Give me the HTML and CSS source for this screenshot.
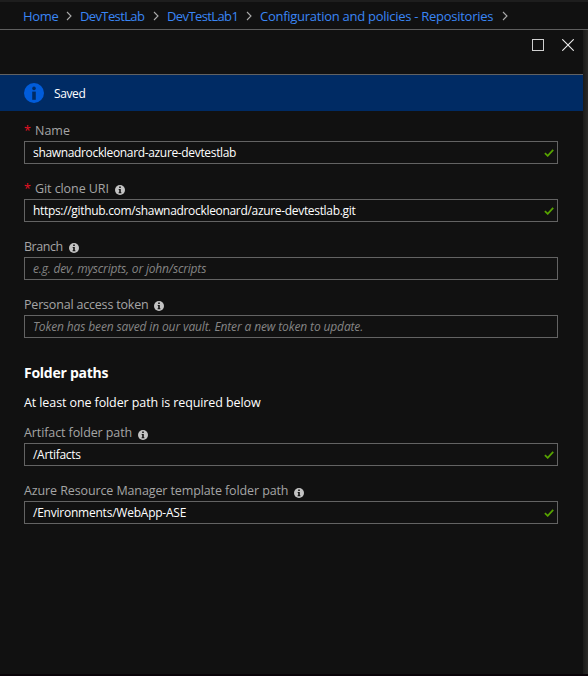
FILE: index.html
```html
<!DOCTYPE html>
<html lang="en">
<head>
<meta charset="utf-8">
<title>Repositories</title>
<link rel="stylesheet" href="styles.css">
</head>
<body>
<svg class="defs" width="0" height="0">
  <symbol id="chev" viewBox="0 0 6 10"><path d="M1 1l4 4-4 4" fill="none" stroke="#aaa" stroke-width="1.1"/></symbol>
  <symbol id="info" viewBox="0 0 10 10"><circle cx="5" cy="5" r="5" fill="#c3c3c3"/><path d="M4.2 1.6h1.6v1.3H4.2zM3.7 4h2.1v3.2h.6v1H3.6v-1h.6V4.9h-.5z" fill="#111"/></symbol>
  <symbol id="check" viewBox="0 0 10 8"><path d="M.9 4.2L3.7 6.8 9.2.9" fill="none" stroke="#57a300" stroke-width="1.8"/></symbol>
</svg>
<nav class="crumbs">
  <a class="c1">Home</a><svg class="chev"><use href="#chev"/></svg>
  <a class="c2">DevTestLab</a><svg class="chev"><use href="#chev"/></svg>
  <a class="c3">DevTestLab1</a><svg class="chev"><use href="#chev"/></svg>
  <a class="c4">Configuration and policies - Repositories</a><svg class="chev"><use href="#chev"/></svg>
</nav>
<div class="main">
  <section class="blade">
    <header class="head">
      <svg width="12" height="12"><rect x=".5" y=".5" width="11" height="11" fill="none" stroke="#d0d0d0"/></svg>
      <svg width="12" height="12"><path d="M.3 .3l11.4 11.4M11.7 .3L.3 11.7" stroke="#eee" stroke-width="1.1"/></svg>
    </header>
    <div class="banner">
      <svg width="20" height="20"><circle cx="10" cy="10" r="10" fill="#015cda"/><circle cx="10" cy="5.4" r="1.8" fill="#002b64"/><path d="M8.2 8.6h3.6v8.2H8.2z" fill="#002b64"/></svg>
      <span>Saved</span>
    </div>
    <form class="form">
      <div class="field"><div class="label"><b>*</b><span class="l1">Name</span></div>
        <div class="input"><span class="v1">shawnadrockleonard-azure-devtestlab</span><svg class="check"><use href="#check"/></svg></div></div>
      <div class="field"><div class="label"><b>*</b><span class="l2">Git clone URI</span><svg class="info"><use href="#info"/></svg></div>
        <div class="input"><span class="v2">https://github.com/shawnadrockleonard/azure-devtestlab.git</span><svg class="check"><use href="#check"/></svg></div></div>
      <div class="field"><div class="label"><span class="l3">Branch</span><svg class="info"><use href="#info"/></svg></div>
        <div class="input hint"><span class="v3">e.g. dev, myscripts, or john/scripts</span></div></div>
      <div class="field"><div class="label"><span class="l4">Personal access token</span><svg class="info"><use href="#info"/></svg></div>
        <div class="input hint"><span class="v4">Token has been saved in our vault. Enter a new token to update.</span></div></div>
      <h2><span>Folder paths</span></h2>
      <p><span>At least one folder path is required below</span></p>
      <div class="field path"><div class="label"><span class="l5">Artifact folder path</span><svg class="info"><use href="#info"/></svg></div>
        <div class="input"><span class="v5">/Artifacts</span><svg class="check"><use href="#check"/></svg></div></div>
      <div class="field path"><div class="label"><span class="l6">Azure Resource Manager template folder path</span><svg class="info"><use href="#info"/></svg></div>
        <div class="input"><span class="v6">/Environments/WebApp-ASE</span><svg class="check"><use href="#check"/></svg></div></div>
    </form>
  </section>
  <div class="edge"></div>
</div>
</body>
</html>
```
FILE: styles.css
```css
* { box-sizing: border-box; }
body {
  margin: 0; width: 588px; height: 676px; overflow: hidden;
  display: flex; flex-direction: column;
  background: #111; color: #fff;
  font: 12.5px/18px "Open Sans", "Noto Sans", sans-serif;
  white-space: nowrap;
  border-bottom: 2px solid #090408;
}
svg { display: block; flex: none; }
.defs { position: absolute; }
.crumbs {
  height: 30px; padding: 0 0 0 23px; flex: none;
  display: flex; align-items: center;
  border-top: 2px solid #1e1e1e; border-bottom: 1px solid #5f5f5f;
  color: #3a86f5; font-size: 13px;
}
.crumbs a { flex: none; }
.c1 { width: 35px; letter-spacing: -0.3px; }
.c2 { width: 65px; letter-spacing: -0.62px; }
.c3 { width: 71px; letter-spacing: -0.6px; }
.c4 { width: 234px; letter-spacing: -0.27px; }
.chev { width: 6px; height: 10px; margin: 0 8px 0 8px; }
.main { display: flex; flex: 1; }
.blade { width: 583px; }
.edge { width: 5px; background: linear-gradient(90deg, #1b1b1a, #2b2a28); }
.head {
  height: 45px; padding: 9px 9px 0 0;
  display: flex; justify-content: flex-end; gap: 18px;
  border-bottom: 1px solid #626262;
}
.banner {
  height: 36px; padding-left: 24px;
  display: flex; align-items: center; gap: 10px;
  background: #002b64; font-size: 12px; font-weight: 500; letter-spacing: -0.4px;
}
.banner span { padding-top: 1px; }
.form { padding: 12px 25px 0 24px; }
.field { height: 41px; margin-bottom: 17px; }
.label { height: 18px; line-height: 15px; display: flex; color: #a5a5a5; }
.label b { width: 11px; color: #e81123; font-weight: 400; }
.l2 { letter-spacing: -0.08px; }
.l3 { letter-spacing: -0.45px; }
.l4 { letter-spacing: -0.19px; }
.l5 { letter-spacing: -0.1px; }
.l6 { letter-spacing: -0.11px; }
.info { width: 10px; height: 10px; margin: 4px 0 0 6px; }
.path .info { margin-top: 5px; }
.input {
  height: 23px; padding: 0 3px 0 8px;
  display: flex; justify-content: space-between; align-items: center;
  border: 1px solid #636363; font-size: 12px; font-weight: 500;
}
.v1 { letter-spacing: -0.34px; }
.v2 { letter-spacing: -0.32px; }
.v3 { letter-spacing: -0.17px; }
.v4 { letter-spacing: -0.13px; }
.v5 { letter-spacing: -0.3px; }
.v6 { letter-spacing: -0.23px; }
.check { width: 10px; height: 8px; }
.hint { color: #858585; font-style: italic; font-weight: 400; }
h2 { margin: 25px 0 0; font-size: 14px; line-height: 20px; font-weight: 700; letter-spacing: -0.26px; }
p { margin: 11px 0 13px; line-height: 18px; font-weight: 500; letter-spacing: -0.1px; }
```
